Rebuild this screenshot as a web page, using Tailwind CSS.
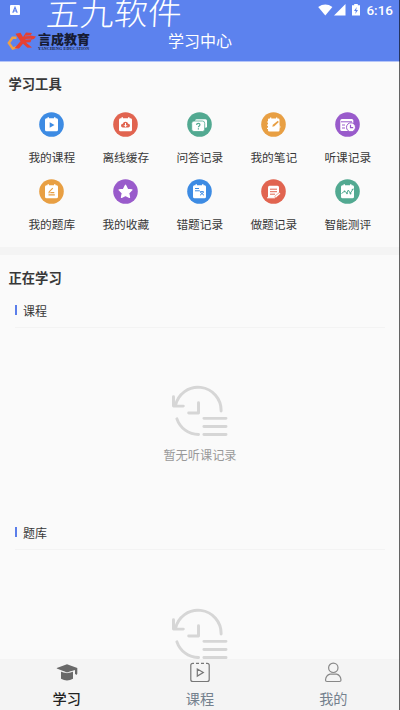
<!DOCTYPE html>
<html lang="zh-CN">
<head>
<meta charset="utf-8">
<title>学习中心</title>
<script src="https://cdn.jsdelivr.net/npm/@tailwindcss/browser@4"></script>
</head>
<body class="bg-[#fafafa]">
<div class="relative flex h-[710px] w-[400px] flex-col overflow-hidden bg-[#fafafa] font-['Noto_Sans_CJK_SC',sans-serif] text-[#383838]">
  <header class="relative h-[62px] shrink-0 border-b border-[#b5c5f8] bg-[#5c82ee] text-white">
    <div class="flex h-5 items-center justify-between pl-[10px] pr-[7px]">
      <svg class="h-[10px] w-[10px]" viewBox="0 0 10 10"><rect width="10" height="10" rx="1" fill="#fff"/><path d="M2.800 7.700 5 2.300 7.200 7.700M3.600 6h2.800" fill="none" stroke="#5c82ee" stroke-width="1.200"/></svg>
      <div class="flex items-center">
        <svg class="h-[12px] w-[44px]" viewBox="0 0 44 12"><path d="M.2 3Q7.300-1.900 14.400 3L7.300 11.500Z" fill="#fff"/><path d="M27.500 0v11.500H16Z" fill="#fff"/><path d="M36.200 0h3.600v1.200h2.200v10.300h-8V1.200h2.200Z" fill="#fff"/><path d="m38.700 3-2.700 4h1.800l-.5 3 2.700-4h-1.800Z" fill="#5c82ee"/></svg>
        <span class="ml-[4px] font-['Roboto',sans-serif] text-[13.500px] font-medium leading-5">6:16</span>
      </div>
    </div>
    <div class="grid h-[41px] grid-cols-3 items-center">
      <div class="flex items-center pl-[7px]">
        <svg class="h-[20px] w-[30px]" viewBox="0 0 30 20"><path d="M9.500 6.800H5.500L1.800 12l4 5.500 6-1.800" fill="none" stroke="#f0a145" stroke-width="2.400"/><path d="m8.500 2.800 5-1 2.500 4.200L19 1.500l6 .5-1.500 2.500 5.500 1-2 2.500-2.500.5-1 2.700-4.500.3 6 5-4.500.2-4.500-4-4 4.800-4.500-.2 6-7Z" fill="#e54032"/><path d="m18 5 5.500-.5M18.500 8.500 24 8" stroke="#5c82ee" stroke-width=".6"/></svg>
        <div class="ml-[1px] flex w-[54px] flex-col pt-[1px] text-[#171c35]">
          <span class="whitespace-nowrap text-[13px] font-black leading-[14px]">言成教育</span>
          <span class="h-[5px] whitespace-nowrap font-['Liberation_Serif',serif] text-[4px] font-bold leading-[5px] tracking-[.18px]">YANCHENG EDUCATION</span>
        </div>
      </div>
      <h1 class="-mt-px whitespace-nowrap text-center text-[16px] font-normal">学习中心</h1>
    </div>
    <div class="absolute left-[46px] top-[1px] -skew-x-3 -skew-y-1 scale-y-95 whitespace-nowrap text-[34px] font-light leading-[22px]">五九软件</div>
  </header>

  <section class="h-[185px] shrink-0 pt-[12px]">
    <h2 class="pl-[8.500px] text-[13.300px] font-bold leading-5">学习工具</h2>
    <div class="ml-[14.800px] mt-[17.500px] grid w-[370px] grid-cols-5 text-center text-[11.700px] leading-5">
      <div class="flex h-[67px] flex-col items-center">
        <svg class="h-[25px] w-[25px] shrink-0" viewBox="0 0 25 25"><circle cx="12.500" cy="12.500" r="12.300" fill="#3d8be3"/><path d="M7.500 6.300h1V5.300H10v1h5V5.300h1.500v1h1q1.500 0 1.500 1.500v10q0 1.500-1.500 1.500h-10Q6 19.300 6 17.800v-10q0-1.500 1.500-1.500Z" fill="#fff"/><path d="m10.700 10.200 4.800 2.800-4.800 2.800Z" fill="#3d8be3"/></svg>
        <span class="mt-[10.500px]">我的课程</span>
      </div>
      <div class="flex h-[67px] flex-col items-center">
        <svg class="h-[25px] w-[25px] shrink-0" viewBox="0 0 25 25"><circle cx="12.500" cy="12.500" r="12.300" fill="#e16450"/><path d="M7.500 6.300h1V5.300H10v1h5V5.300h1.500v1h1q1.500 0 1.500 1.500v10q0 1.500-1.500 1.500h-10Q6 19.300 6 17.800v-10q0-1.500 1.500-1.500Z" fill="#fff"/><path d="M10 15.500a1.900 1.900 0 0 1-.2-3.800 2.800 2.800 0 0 1 5.400 0 1.900 1.900 0 0 1-.2 3.800Z" fill="#e16450"/><path d="M12.500 11v3.500m-1.500-1.300 1.500 1.500 1.500-1.500" fill="none" stroke="#fff"/></svg>
        <span class="mt-[10.500px]">离线缓存</span>
      </div>
      <div class="flex h-[67px] flex-col items-center">
        <svg class="h-[25px] w-[25px] shrink-0" viewBox="0 0 25 25"><circle cx="12.500" cy="12.500" r="12.300" fill="#52a991"/><rect x="8" y="7.200" width="12" height="8.500" rx="1.500" fill="#fff"/><rect x="4.700" y="9" width="13" height="10.500" rx="2.300" fill="#fff" stroke="#52a991" stroke-width=".8"/><path d="M9.600 12.900c0-2.100 3.400-2 3.400-.1 0 1.200-1.600 1-1.600 2.400m0 1.100v1.200" fill="none" stroke="#52a991" stroke-width="1.200"/></svg>
        <span class="mt-[10.500px]">问答记录</span>
      </div>
      <div class="flex h-[67px] flex-col items-center">
        <svg class="h-[25px] w-[25px] shrink-0" viewBox="0 0 25 25"><circle cx="12.500" cy="12.500" r="12.300" fill="#e89f43"/><path d="M8 6.500h1v-1h1.300v1H15v-1h1.300v1h1q1.200 0 1.200 1.200v10.600q0 1.200-1.200 1.200H8.200Q7 19.500 7 18.300V17H6v-1.200h1v-2H6v-1.200h1v-2H6V9.400h1V7.500q0-1 1-1Z" fill="#fff"/><path d="m11.300 14.800.5-2 5-4 1 1.200-4.500 4.300Z" fill="#e89f43"/><path d="m18.500 12.500 1 2.500-1 2Z" fill="#fff"/></svg>
        <span class="mt-[10.500px]">我的笔记</span>
      </div>
      <div class="flex h-[67px] flex-col items-center">
        <svg class="h-[25px] w-[25px] shrink-0" viewBox="0 0 25 25"><circle cx="12.500" cy="12.500" r="12.300" fill="#995bcb"/><rect x="5.300" y="6.900" width="13" height="12.200" rx="1.500" fill="#fff"/><path d="M6 9.800h11M7 13h3m-3 3h3" stroke="#995bcb" stroke-width="1"/><circle cx="16" cy="15.300" r="4.500" fill="#fff" stroke="#995bcb"/><path d="M15.500 12.700v3h2.700" fill="none" stroke="#995bcb" stroke-width="1.200"/></svg>
        <span class="mt-[10.500px]">听课记录</span>
      </div>
      <div class="flex h-[67px] flex-col items-center">
        <svg class="h-[25px] w-[25px] shrink-0" viewBox="0 0 25 25"><circle cx="12.500" cy="12.500" r="12.300" fill="#e89f43"/><path d="M7.500 6.300h1V5.300H10v1h5V5.300h1.500v1h1q1.500 0 1.500 1.500v10q0 1.500-1.500 1.500h-10Q6 19.300 6 17.800v-10q0-1.500 1.500-1.500Z" fill="#fff"/><path d="M9.500 15.800h6.300m-5.900-1.500.4-1.600 3.500-3.500m-2.500 4.500h4" fill="none" stroke="#e89f43" stroke-width="1.200"/></svg>
        <span class="mt-[10.500px]">我的题库</span>
      </div>
      <div class="flex h-[67px] flex-col items-center">
        <svg class="h-[25px] w-[25px] shrink-0" viewBox="0 0 25 25"><circle cx="12.500" cy="12.500" r="12.300" fill="#995bcb"/><path d="m12.500 6.300 2 4 4.400.6-3.200 3.100.8 4.400-4-2.100-4 2.100.8-4.400-3.200-3.100 4.400-.6Z" fill="#fff" stroke="#fff" stroke-width="1.300" stroke-linejoin="round"/></svg>
        <span class="mt-[10.500px]">我的收藏</span>
      </div>
      <div class="flex h-[67px] flex-col items-center">
        <svg class="h-[25px] w-[25px] shrink-0" viewBox="0 0 25 25"><circle cx="12.500" cy="12.500" r="12.300" fill="#3d8be3"/><path d="M7.500 6.300h1V5.300H10v1h5V5.300h1.500v1h1q1.500 0 1.500 1.500v10q0 1.500-1.500 1.500h-10Q6 19.300 6 17.800v-10q0-1.500 1.500-1.500Z" fill="#fff"/><path d="M8 9.500h4M8 11.800h4.500l1 .8h3m-3.500.2 4 3.500m0-3.500-4 3.500" fill="none" stroke="#3d8be3" stroke-width="1"/></svg>
        <span class="mt-[10.500px]">错题记录</span>
      </div>
      <div class="flex h-[67px] flex-col items-center">
        <svg class="h-[25px] w-[25px] shrink-0" viewBox="0 0 25 25"><circle cx="12.500" cy="12.500" r="12.300" fill="#e16450"/><path d="M8.500 6.800h8q1.500 0 1.500 1.500v5.500l-4.500 5H7V8.300q0-1.500 1.500-1.500Z" fill="#fff"/><path d="M9 10.200h7M9 12.700h7M9 15.200h5" stroke="#e16450"/><path d="m13.500 19 .5-2 4.300-3.500 1.300 1.300-4.300 3.700Z" fill="#fff" stroke="#e16450" stroke-width=".5"/><path d="M6 18.800h8" stroke="#fff"/></svg>
        <span class="mt-[10.500px]">做题记录</span>
      </div>
      <div class="flex h-[67px] flex-col items-center">
        <svg class="h-[25px] w-[25px] shrink-0" viewBox="0 0 25 25"><circle cx="12.500" cy="12.500" r="12.300" fill="#52a991"/><path d="M7.500 6.300h1V5.300H10v1h5V5.300h1.500v1h1q1.500 0 1.500 1.500v10q0 1.500-1.500 1.500h-10Q6 19.300 6 17.800v-10q0-1.500 1.500-1.500Z" fill="#fff"/><path d="m6.500 14.500 1.800-1.300 1.500-1 2 2 1.500-3.200 2 3.200 3-4.500" fill="none" stroke="#52a991" stroke-width="1"/><g fill="#52a991"><circle cx="9.500" cy="12.300" r=".9"/><circle cx="12" cy="14.300" r=".9"/><circle cx="15.500" cy="14.500" r=".9"/><circle cx="17.500" cy="10.500" r=".8"/></g></svg>
        <span class="mt-[10.500px]">智能测评</span>
      </div>
    </div>
  </section>

  <div class="h-2 shrink-0 bg-[#f4f4f4]"></div>

  <main class="h-[404px] shrink-0 overflow-hidden pt-[12.500px]">
    <h2 class="pl-[8.500px] text-[13.300px] font-bold leading-5">正在学习</h2>
    <section class="mx-[15px] mt-[12px] h-[222.500px]">
      <div class="flex h-[28px] items-start border-b border-[#f3f3f3]">
        <div class="mt-[5.500px] h-[10px] w-[1.500px] bg-[#5b7eea]"></div>
        <h3 class="ml-[6.500px] text-[12px] font-normal leading-[22px]">课程</h3>
      </div>
      <div class="flex flex-col items-center pt-[57.500px]">
        <svg class="mr-[1px] h-[53px] w-[57px]" viewBox="0 0 58 54" fill="none" stroke="#d6d6d6" stroke-width="3" stroke-linecap="round" stroke-linejoin="round"><path d="M2.500 12v9.500h10M4.500 21a23.500 23.500 0 0 1 46.500 5.500M6 34.500A23.500 23.500 0 0 0 28 50.500M28 18v10.500H18M33.500 34H56M33.500 42.200H56M33.500 50.500H56"/></svg>
        <p class="mt-[7px] text-[12.200px] leading-5 text-[#999]">暂无听课记录</p>
      </div>
    </section>
    <section class="mx-[15px] h-[222.500px]">
      <div class="flex h-[28px] items-start border-b border-[#f3f3f3]">
        <div class="mt-[5px] h-[10px] w-[1.500px] bg-[#5b7eea]"></div>
        <h3 class="ml-[6.500px] text-[12px] font-normal leading-[21px]">题库</h3>
      </div>
      <div class="flex flex-col items-center pt-[57.500px]">
        <svg class="mr-[1px] h-[53px] w-[57px]" viewBox="0 0 58 54" fill="none" stroke="#d6d6d6" stroke-width="3" stroke-linecap="round" stroke-linejoin="round"><path d="M2.500 12v9.500h10M4.500 21a23.500 23.500 0 0 1 46.500 5.500M6 34.500A23.500 23.500 0 0 0 28 50.500M28 18v10.500H18M33.500 34H56M33.500 42.200H56M33.500 50.500H56"/></svg>
      </div>
    </section>
  </main>

  <nav class="grid h-[51px] shrink-0 grid-cols-3 bg-[#f4f4f4] text-[14.200px] leading-5 text-[#75818e]">
    <div class="flex flex-col items-center pt-[3px] text-[#222]">
      <svg class="h-[21px] w-[22px] shrink-0" viewBox="0 0 22 21" fill="#696969"><path d="M11 2.300 21.300 6v5.800l-1 1.200-1.300-1.200V8L11 10.500.8 6.500V6Z"/><path d="M5 9.500q6 2.500 12 0v7.300q-6 3.200-12 0Z"/><path d="M4.500 9.300q6.500 3 13 0" fill="none" stroke="#f4f4f4" stroke-width=".5"/></svg>
      <span class="mt-[5px] font-medium">学习</span>
    </div>
    <div class="flex flex-col items-center pt-[3px]">
      <svg class="h-[21px] w-[22px] shrink-0" viewBox="0 0 22 21" fill="none" stroke="#777" stroke-width="1.200"><path d="M5 1.300H3.800Q1.800 1.300 1.800 3.300V17.500q0 2 2 2h14.400q2 0 2-2V3.300q0-2-2-2H17M7 1.300h3M12 1.300h3M8.300 7l6 3.500-6 3.600Z"/></svg>
      <span class="mt-[5px]">课程</span>
    </div>
    <div class="flex flex-col items-center pt-[3px]">
      <svg class="h-[21px] w-[22px] shrink-0" viewBox="0 0 22 21" fill="none" stroke="#888" stroke-width="1.200"><circle cx="11.300" cy="5.800" r="4.700"/><path d="M8 12.200h6.600q4 1 4.400 5.800 0 1.500-1.500 1.500H5q-1.500 0-1.500-1.500.5-4.800 4.500-5.800Z"/></svg>
      <span class="mt-[5px]">我的</span>
    </div>
  </nav>
  <div class="absolute inset-y-0 right-0 w-px bg-black/60"></div>
</div>
</body>
</html>
